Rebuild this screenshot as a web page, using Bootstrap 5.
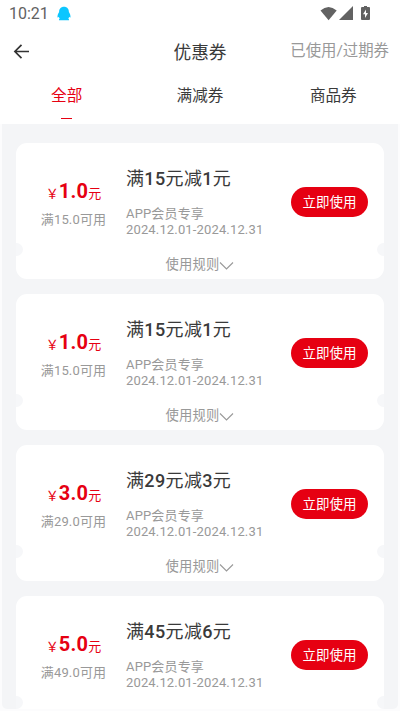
<!DOCTYPE html>
<html lang="zh-CN">
<head>
<meta charset="utf-8">
<meta name="viewport" content="width=device-width, initial-scale=1">
<title>优惠券</title>
<link href="https://cdn.jsdelivr.net/npm/bootstrap@5.3.0/dist/css/bootstrap.min.css" rel="stylesheet">
<style>
body{font-family:Roboto,"Noto Sans CJK SC",sans-serif;color:#3a3a3a;background:#fcfcfd}
.screen{height:711px;width:400px}
.status{height:28px;padding:0 30px 0 9px;color:#626262;font-size:16px}
.topbar{height:47px;display:grid;grid-template-columns:1fr auto 1fr;padding:0 11px 0 13px;align-items:center}
.topbar h1{font-size:17.7px;font-weight:400;line-height:24px;padding-top:2px;position:relative;left:-1px}
.history{font-size:15.4px;color:#999;line-height:22px;padding-bottom:1px}
.tabs{height:49px;font-size:15.6px;line-height:22px;padding-top:9.5px}
.tab-on{color:#e60012}
.tab-on::after{content:"";display:block;width:11px;height:1.5px;margin:11px auto 0;background:#e60012}
.coupons{background:#f4f5f7;padding:19px 14px 0;margin:0 2px;gap:15.5px;height:585px;border-radius:0 0 5px 5px}
.coupon{height:135.5px;border-radius:11px;background:#fff;flex:none}
.coupon::before,.coupon::after{content:"";position:absolute;top:100px;width:7px;height:13px;background:#f6f7f9}
.coupon::before{left:0;border-radius:0 7px 7px 0}
.coupon::after{right:0;border-radius:7px 0 0 7px}
.price-col{width:110px;padding-left:5px;padding-top:34px}
.price{color:#e60012;font-size:13px;line-height:28px;height:28px}
.price b{font-size:20px;letter-spacing:.2px}
.gray{color:#999;font-size:13px;letter-spacing:.15px}
.limit{line-height:20px;margin-top:5px}
.info{padding-top:23px}
.info h2{font-size:18px;font-weight:500;line-height:26px;letter-spacing:.35px}
.info h2 span{font-weight:400}
.desc{line-height:16px;margin-top:14px}
.use{margin:43.5px 16px 0 auto;width:77px;height:30px;background:#e60012;color:#fff;font-size:13.5px;line-height:30px}
.use:hover{background:#cf0010;color:#fff}
.rules{line-height:20px;height:23.5px;font-size:13.3px}
</style>
</head>
<body>
<main class="screen overflow-hidden">
<div class="bg-white">
<div class="status d-flex align-items-center">
<span>10:21</span>
<svg class="ms-2" width="14" height="16" viewBox="0 0 14 16"><path d="M7 .8C3.900.8 2.100 3 2.100 6C1.100 7.500.3 9.700.5 11.200c.3.500 1 0 1.300-.4.2.8.500 1.400.9 1.900-.7.400-.9 1-.7 1.600H12c.2-.6 0-1.200-.7-1.600.4-.5.7-1.100.9-1.900.3.400 1 .9 1.300.4.2-1.500-.6-3.700-1.600-5.200C11.900 3 10.100.8 7 .8z" fill="#0cc6ff"/></svg>
<svg class="ms-auto" width="50" height="16" viewBox="0 0 50 16" fill="#626262"><path d="M.5 4.500Q8.500-2.500 16.700 4.500L8.600 14.300z"/><path d="M33 0v14H19z"/><path fill-rule="evenodd" d="M42 1h2V0h3v1h2q1 0 1 1v11q0 1-1 1h-7q-1 0-1-1V2q0-1 1-1zM46 3.500l-3 4.700h2V12l3-5h-2z"/></svg>
</div>
<header class="topbar">
<svg width="17" height="16" viewBox="0 0 17 16" fill="none" stroke="#333" stroke-width="1.700"><path d="M16 7.500H2M8.500.8L1.900 7.500l6.600 6.700"/></svg>
<h1 class="m-0">优惠券</h1>
<span class="history text-end text-nowrap">已使用/过期券</span>
</header>
<nav class="tabs d-flex text-center">
<div class="col-4 tab-on">全部</div><div class="col-4">满减券</div><div class="col-4">商品券</div>
</nav>
</div>
<section class="coupons d-flex flex-column overflow-hidden">
<article class="coupon position-relative"><div class="d-flex h-100">
<div class="price-col text-center"><div class="price">￥<b>1.0</b>元</div><div class="gray limit">满15.0可用</div></div>
<div class="info"><h2 class="m-0"><span>满</span>15<span>元减</span>1<span>元</span></h2><div class="gray desc">APP会员专享<br>2024.12.01-2024.12.31</div></div>
<button class="btn rounded-pill border-0 p-0 use">立即使用</button></div>
<div class="gray rules position-absolute bottom-0 w-100 d-flex justify-content-center">使用规则<svg width="15" height="20" viewBox="0 0 15 20" fill="none" stroke="#999" stroke-width="1.100"><path d="M1 7.500l6.500 6.500L14 7.500"/></svg></div></article>
<article class="coupon position-relative"><div class="d-flex h-100">
<div class="price-col text-center"><div class="price">￥<b>1.0</b>元</div><div class="gray limit">满15.0可用</div></div>
<div class="info"><h2 class="m-0"><span>满</span>15<span>元减</span>1<span>元</span></h2><div class="gray desc">APP会员专享<br>2024.12.01-2024.12.31</div></div>
<button class="btn rounded-pill border-0 p-0 use">立即使用</button></div>
<div class="gray rules position-absolute bottom-0 w-100 d-flex justify-content-center">使用规则<svg width="15" height="20" viewBox="0 0 15 20" fill="none" stroke="#999" stroke-width="1.100"><path d="M1 7.500l6.500 6.500L14 7.500"/></svg></div></article>
<article class="coupon position-relative"><div class="d-flex h-100">
<div class="price-col text-center"><div class="price">￥<b>3.0</b>元</div><div class="gray limit">满29.0可用</div></div>
<div class="info"><h2 class="m-0"><span>满</span>29<span>元减</span>3<span>元</span></h2><div class="gray desc">APP会员专享<br>2024.12.01-2024.12.31</div></div>
<button class="btn rounded-pill border-0 p-0 use">立即使用</button></div>
<div class="gray rules position-absolute bottom-0 w-100 d-flex justify-content-center">使用规则<svg width="15" height="20" viewBox="0 0 15 20" fill="none" stroke="#999" stroke-width="1.100"><path d="M1 7.500l6.500 6.500L14 7.500"/></svg></div></article>
<article class="coupon position-relative"><div class="d-flex h-100">
<div class="price-col text-center"><div class="price">￥<b>5.0</b>元</div><div class="gray limit">满49.0可用</div></div>
<div class="info"><h2 class="m-0"><span>满</span>45<span>元减</span>6<span>元</span></h2><div class="gray desc">APP会员专享<br>2024.12.01-2024.12.31</div></div>
<button class="btn rounded-pill border-0 p-0 use">立即使用</button></div></article>
</section>
</main>
<script src="https://cdn.jsdelivr.net/npm/bootstrap@5.3.0/dist/js/bootstrap.bundle.min.js"></script>
</body>
</html>
